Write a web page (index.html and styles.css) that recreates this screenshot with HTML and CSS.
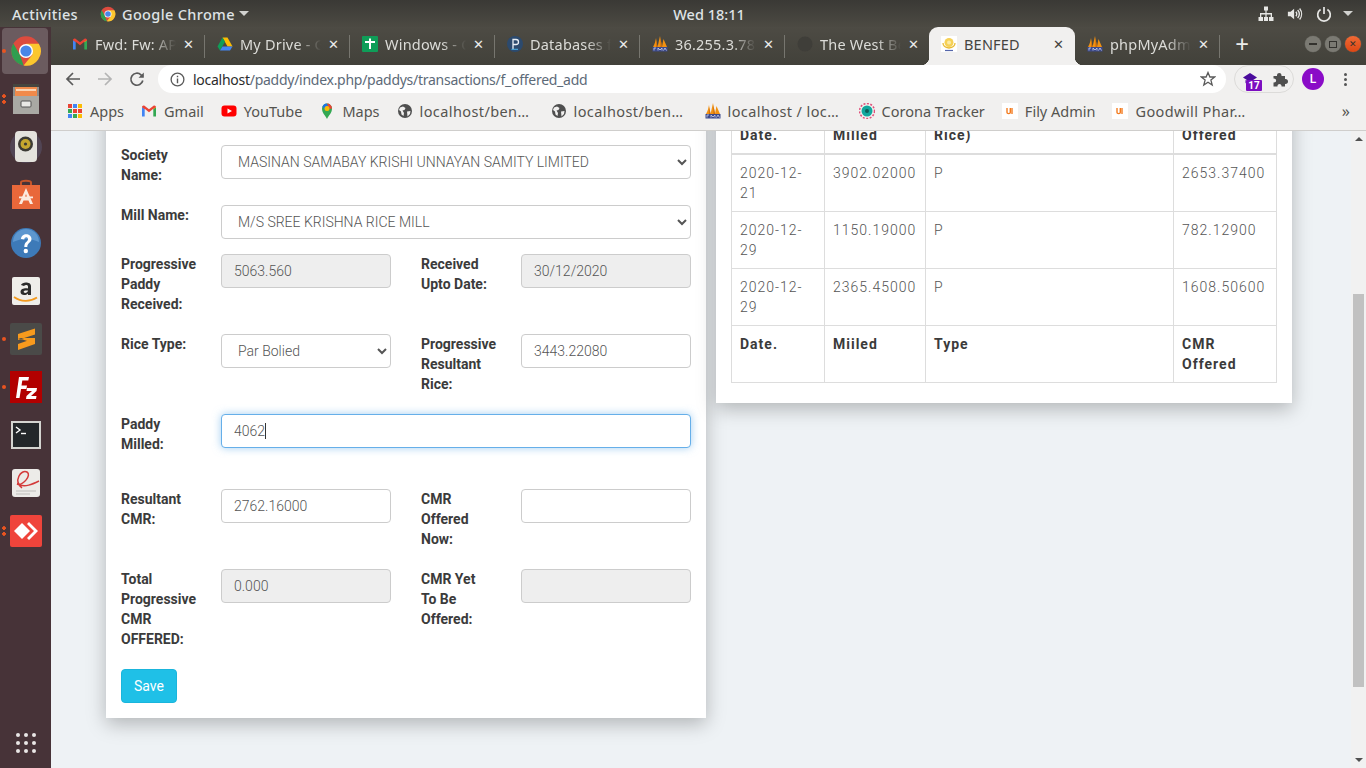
FILE: index.html
```html
<!DOCTYPE html>
<html lang="en">
<head>
<meta charset="utf-8">
<title>BENFED</title>
<link rel="stylesheet" href="styles.css">
</head>
<body>
<svg class="defs" width="0" height="0" aria-hidden="true">
  <defs>
    <symbol id="chrome" viewBox="0 0 24 24">
      <circle cx="12" cy="12" r="11" fill="#dd4b3e"/>
      <path d="M2.5 6.4L7.4 14.9 10.2 22.9A11 11 0 0 1 2.5 6.4Z" fill="#2f9e4f"/>
      <path d="M21.6 6.5H12L16.8 14.8 10.2 22.9A11 11 0 0 0 21.6 6.5Z" fill="#fbc72e"/>
      <circle cx="12" cy="12" r="5.3" fill="#fff"/>
      <circle cx="12" cy="12" r="4.2" fill="#4a86e8"/>
    </symbol>
    <symbol id="pma" viewBox="0 0 16 16">
      <path d="M1 11C3 8 3.500 4 4 2L5.500 11ZM5.500 11C6.500 7 7.500 2 8 0L10 11ZM10 11C10.500 8 11 5 11.500 3L15 11Z" fill="#f29111"/>
      <path d="M4.500 4L5.500 11H4.200ZM8.500 2L10 11H8.500Z" fill="#c8670a"/>
      <rect x="0.500" y="11" width="15" height="4.500" fill="#3c4a8c"/>
      <path d="M2 14.500V12H4M6 14.500V12L8 14 10 12V14.500M11.500 14.500L13 12 14.500 14.500" fill="none" stroke="#cdd2ea" stroke-width=".8"/>
    </symbol>
    <symbol id="globe" viewBox="0 0 16 16">
      <circle cx="8" cy="8" r="7" fill="#4f4f4f"/>
      <path d="M3 4.500L6 3.500 8.500 5 7.500 7 5.500 7.500 7 10 6.500 13 4.500 11.500 4 8.500 2 7ZM10 8.500L13.500 8 13 11 10.500 13.500Z" fill="#f1f0ef"/>
    </symbol>
    <symbol id="gmail" viewBox="0 0 16 16">
      <path d="M1 13.500V4L3.700 5.800V13.500Z" fill="#4285f4"/>
      <path d="M12.300 13.500V5.800L15 4V13.500Z" fill="#34a853"/>
      <path d="M1 4.200C1 2.800 2.400 2 3.500 2.800L8 6.200 12.500 2.800C13.600 2 15 2.800 15 4.200L12.300 6.200V5.800L8 9.200 3.700 5.800V6.200Z" fill="#ea4335"/>
      <path d="M12.300 6.200L15 4.200V4L12.300 5.800Z" fill="#fbbc04"/>
    </symbol>
    <symbol id="ui" viewBox="0 0 16 16">
      <rect width="16" height="16" fill="#fff"/>
      <path d="M5 5V9.500C5 11 8.300 11 8.300 9.500V5" fill="none" stroke="#f47c20" stroke-width="1.400"/>
      <path d="M10 5V11" stroke="#f47c20" stroke-width="1.400"/>
    </symbol>
  </defs>
</svg>

<header class="topbar">
  <div class="tb-left">
    <span class="tb-activities">Activities</span>
    <span class="tb-app">
      <svg class="ic16"><use href="#chrome"/></svg>
      <span>Google Chrome</span>
      <i class="tb-caret"></i>
    </span>
  </div>
  <div class="tb-clock">Wed 18:11</div>
  <div class="tb-right">
    <svg class="tb-sys" viewBox="0 0 16 16"><path d="M6 0.500H10V4.500H8.600V7H14V11H15.500V15H11V11H12.700V8.500H8.600V11H10V15H6V11H7.400V8.500H3.300V11H5V15H0.500V11H2V7H7.400V4.500H6Z" fill="#e6e6e4"/></svg>
    <svg class="tb-sys" viewBox="0 0 18 16"><path d="M1 5.500H4L8 2V14L4 10.500H1Z" fill="#e6e6e4"/><path d="M10 5.500A4 4 0 0 1 10 10.500M12 3.500A7 7 0 0 1 12 12.500M14.200 1.800A10 10 0 0 1 14.200 14.200" fill="none" stroke="#e6e6e4" stroke-width="1.500"/></svg>
    <svg class="tb-sys" viewBox="0 0 16 16"><path d="M4.600 3.500A6.300 6.300 0 1 0 11.400 3.500M8 1V8" fill="none" stroke="#e6e6e4" stroke-width="1.700"/></svg>
    <i class="tb-caret"></i>
  </div>
</header>

<div class="desk">
  <nav class="dock">
    <div class="dock-item is-active">
      <i class="dots one"></i>
      <svg class="dock-ic"><use href="#chrome"/></svg>
    </div>
    <div class="dock-item">
      <i class="dots two"></i>
      <svg class="dock-ic" viewBox="0 0 32 32">
        <rect x="3" y="1" width="26" height="30" rx="2" fill="#8d8d8a"/>
        <rect x="3" y="1" width="26" height="3" fill="#45453f"/>
        <rect x="5" y="4" width="22" height="9" fill="#f08a4b"/>
        <rect x="6" y="6" width="20" height="2" fill="#f9d5b6"/>
        <rect x="3" y="13" width="26" height="18" fill="#a9a9a4"/>
        <rect x="11" y="18" width="10" height="6" rx="1" fill="#e9e9e6" stroke="#555" stroke-width="1"/>
      </svg>
    </div>
    <div class="dock-item">
      <svg class="dock-ic" viewBox="0 0 32 32">
        <circle cx="16" cy="16" r="16" fill="#5e5b78" opacity=".45"/>
        <rect x="5" y="0" width="22" height="31" rx="4" fill="#e4e3dd"/>
        <circle cx="15.500" cy="13" r="7.500" fill="#3c3b34"/>
        <circle cx="15.500" cy="13" r="5" fill="#c5a72f"/>
        <circle cx="15.500" cy="13" r="1.600" fill="#3c3b34"/>
      </svg>
    </div>
    <div class="dock-item">
      <svg class="dock-ic" viewBox="0 0 32 32">
        <path d="M11 6V3.500C11 1 21 1 21 3.500V6" fill="none" stroke="#c4552b" stroke-width="2"/>
        <path d="M2 6H30V30H2Z" fill="#e9683a"/>
        <path d="M16 9L23 25H20L18.500 21.500H13.500L12 25H9ZM14.500 19H17.500L16 15Z" fill="#fbeadf"/>
        <rect x="9" y="17.500" width="14" height="1.800" fill="#fbeadf"/>
      </svg>
    </div>
    <div class="dock-item">
      <svg class="dock-ic" viewBox="0 0 32 32">
        <circle cx="16" cy="16" r="15" fill="#3d7ab8"/>
        <path d="M3 15A13 13 0 0 1 29 15C20 11 12 11 3 15Z" fill="#5d97cf"/>
        <path d="M11 12C11 5.500 21.500 5.500 21.500 12C21.500 16 17.300 15.500 17.300 20H14.300C14.300 14.500 18 15 18 12C18 9.500 14.300 9.500 14.300 12.500Z" fill="#fff"/>
        <circle cx="15.800" cy="24" r="2.200" fill="#fff"/>
      </svg>
    </div>
    <div class="dock-item">
      <svg class="dock-ic" viewBox="0 0 32 32">
        <rect x="2" y="2" width="28" height="28" rx="2" fill="#efeeea"/>
        <path d="M11 10C12 6.500 21 6.500 21 11V20H18V18.500C15.500 21 10.500 20.500 10.500 17C10.500 13.500 15 13 18 13.500V11.500C18 9.500 15 9.500 14 11ZM13.700 16.800C13.700 18.800 18 18 18 15.500C15.500 15.200 13.700 15.500 13.700 16.800Z" fill="#2b2b2b"/>
        <path d="M4 22C11 27 20 27 27 22.500" fill="none" stroke="#f39a1f" stroke-width="1.800"/>
      </svg>
    </div>
    <div class="dock-item">
      <i class="dots one"></i>
      <svg class="dock-ic" viewBox="0 0 32 32">
        <rect width="32" height="32" rx="2" fill="#4a4a48"/>
        <path d="M25 5.500V11.500L8 17V11ZM8 15L25 20.500V15ZM25 20.500V15L8 21V27L25 21Z" fill="#f79a1d"/>
      </svg>
    </div>
    <div class="dock-item">
      <i class="dots one"></i>
      <svg class="dock-ic" viewBox="0 0 32 32">
        <rect width="32" height="32" fill="#b20000"/>
        <path d="M6 27L9 6H19L18.300 9.500H12.300L11.500 14.500H17L16.400 18H11L9.500 27Z" fill="#fff"/>
        <path d="M17 17H27L26.500 20 21 25H26.500L26 28H16L16.500 25 22 20H16.500Z" fill="#fff"/>
      </svg>
    </div>
    <div class="dock-item">
      <svg class="dock-ic" viewBox="0 0 32 32">
        <rect x="1" y="2" width="30" height="28" fill="#d4d4d0"/>
        <rect x="3" y="4" width="26" height="24" fill="#23272a"/>
        <path d="M6 8L10 11 6 14" fill="none" stroke="#fff" stroke-width="1.400"/>
        <path d="M11 14.500H16" stroke="#fff" stroke-width="1.400"/>
      </svg>
    </div>
    <div class="dock-item">
      <svg class="dock-ic" viewBox="0 0 32 32">
        <rect x="2" y="2" width="28" height="28" rx="3" fill="#ecebe8"/>
        <path d="M12 21C3 14 11 2 17 5C22 8 13 19 7 17C15 21 23 17 29 14" fill="none" stroke="#d33a3a" stroke-width="1.500"/>
        <path d="M6 24H26M6 27H20" stroke="#bdbdb9" stroke-width="1.200"/>
      </svg>
    </div>
    <div class="dock-item">
      <i class="dots two"></i>
      <svg class="dock-ic" viewBox="0 0 32 32">
        <rect width="32" height="32" rx="2" fill="#ef443b"/>
        <path d="M12 8L20 16 12 24 4 16Z" fill="#fff"/>
        <path d="M19 7L28 16 19 25 17 23 24 16 17 9Z" fill="#fff"/>
      </svg>
    </div>
    <div class="dock-item dock-grid">
      <div class="grid-dots">
        <i></i><i></i><i></i><i></i><i></i><i></i><i></i><i></i><i></i>
      </div>
    </div>
  </nav>

  <main class="browser">
    <div class="tabs">
      <div class="tab">
        <svg class="ic16"><use href="#gmail"/></svg>
        <span class="tab-title">Fwd: Fw: AP</span>
        <span class="tab-x">✕</span>
      </div>
      <div class="tab">
        <svg class="ic16" viewBox="0 0 16 16"><path d="M5.500 1.500H10.500L15.500 10.500H10.500Z" fill="#fbbc04"/><path d="M5.500 1.500L0.500 10.500 3 14.500 8 5.800Z" fill="#0f9d58"/><path d="M3 14.500H13L15.500 10.500H5.500Z" fill="#4285f4"/></svg>
        <span class="tab-title">My Drive - G</span>
        <span class="tab-x">✕</span>
      </div>
      <div class="tab">
        <svg class="ic16" viewBox="0 0 16 16"><rect width="16" height="16" rx="1" fill="#0f9d58"/><path d="M3 6H13M8 2.500V13" stroke="#fff" stroke-width="2"/></svg>
        <span class="tab-title">Windows - C</span>
        <span class="tab-x">✕</span>
      </div>
      <div class="tab">
        <svg class="ic16" viewBox="0 0 16 16"><circle cx="8" cy="8" r="8" fill="#2c4a6e"/><path d="M6 13V3.500H9A2.500 2.500 0 0 1 9 8.500H6" fill="none" stroke="#e8eef5" stroke-width="1.300"/><path d="M4.500 13.300H11" stroke="#4fb3e8" stroke-width="1"/></svg>
        <span class="tab-title">Databases f</span>
        <span class="tab-x">✕</span>
      </div>
      <div class="tab">
        <svg class="ic16"><use href="#pma"/></svg>
        <span class="tab-title">36.255.3.78:</span>
        <span class="tab-x">✕</span>
      </div>
      <div class="tab tab-nosep">
        <svg class="ic16" viewBox="0 0 16 16"><circle cx="8" cy="8" r="7.500" fill="#3f3e39"/></svg>
        <span class="tab-title">The West Be</span>
        <span class="tab-x">✕</span>
      </div>
      <div class="tab is-active">
        <svg class="ic16" viewBox="0 0 16 16"><rect width="16" height="16" fill="#fff"/><circle cx="8" cy="6.500" r="4.500" fill="#f6d155"/><circle cx="8" cy="6.500" r="2" fill="#fbeaa5"/><path d="M2 7C2 10 4 11.500 8 12 12 11.500 14 10 14 7" fill="none" stroke="#e9bc36" stroke-width="1.300"/><path d="M4 14.500H12" stroke="#5566aa" stroke-width="1.200"/></svg>
        <span class="tab-title">BENFED</span>
        <span class="tab-x">✕</span>
      </div>
      <div class="tab">
        <svg class="ic16"><use href="#pma"/></svg>
        <span class="tab-title">phpMyAdmi</span>
        <span class="tab-x">✕</span>
      </div>
      <span class="tab-plus">+</span>
      <div class="win-btns">
        <span class="win-btn"><i class="win-min"></i></span>
        <span class="win-btn"><i class="win-max"></i></span>
        <span class="win-btn win-close">✕</span>
      </div>
    </div>

    <div class="toolbar">
      <svg class="tool" viewBox="0 0 16 16"><path d="M15 8H2M8 2L2 8 8 14" fill="none" stroke="#5a5a5a" stroke-width="1.700"/></svg>
      <svg class="tool" viewBox="0 0 16 16"><path d="M1 8H14M8 2L14 8 8 14" fill="none" stroke="#b4b4b4" stroke-width="1.700"/></svg>
      <svg class="tool" viewBox="0 0 16 16"><path d="M13.800 9.500A6 6 0 1 1 12 3.800L14 5.500" fill="none" stroke="#5a5a5a" stroke-width="1.700"/><path d="M14.800 1.500V6.800H9.500Z" fill="#5a5a5a"/></svg>
      <div class="omnibox">
        <svg class="omni-info" viewBox="0 0 16 16"><circle cx="8" cy="8" r="6.800" fill="none" stroke="#5a5a5a" stroke-width="1.400"/><path d="M8 7V12M8 4V5.600" stroke="#5a5a5a" stroke-width="1.500"/></svg>
        <span class="url"><b>localhost</b>/paddy/index.php/paddys/transactions/f_offered_add</span>
        <svg class="omni-star" viewBox="0 0 16 16"><path d="M8 1.500L9.900 6H14.700L10.900 9.100 12.200 14 8 11.300 3.800 14 5.100 9.100 1.300 6H6.100Z" fill="none" stroke="#5a5a5a" stroke-width="1.300"/></svg>
      </div>
      <div class="ext-pill">
        <span class="ext-cap">
          <svg class="ic16" viewBox="0 0 16 16"><path d="M8 2L15 6.500 8 11 1 6.500Z" fill="#4a0b9c"/><path d="M3.500 9V12L8 14.500 10 13V10.500L8 12Z" fill="#4a0b9c"/></svg>
          <span class="ext-badge">17</span>
        </span>
        <svg class="ic16" viewBox="0 0 16 16"><path d="M1.500 5H5C4.500 1 10 1 9.500 5H13V8C17 7.500 17 13.500 13 13V15.500H9.500C10 12 5 12 5.500 15.500H1.500V11.500C5 12 5 7 1.500 7.500Z" fill="#4f4f4f"/></svg>
      </div>
      <span class="avatar">L</span>
      <div class="kebab"><i></i><i></i><i></i></div>
    </div>

    <div class="bookmarks">
      <span class="bm">
        <span class="apps-ic"><i class="a1"></i><i class="a2"></i><i class="a3"></i><i class="a4"></i><i class="a5"></i><i class="a6"></i><i class="a7"></i><i class="a8"></i><i class="a9"></i></span>
        <span>Apps</span>
      </span>
      <span class="bm"><svg class="ic16"><use href="#gmail"/></svg><span>Gmail</span></span>
      <span class="bm"><svg class="ic16" viewBox="0 0 16 16"><rect x="0.500" y="2.500" width="15" height="11" rx="3" fill="#f00"/><path d="M6.500 5.500V10.500L11 8Z" fill="#fff"/></svg><span>YouTube</span></span>
      <span class="bm"><svg class="ic16" viewBox="0 0 16 16"><path d="M8 16C6 12 3 10 3 5.500A5 5 0 0 1 13 5.500C13 10 10 12 8 16Z" fill="#34a853"/><path d="M3.500 3.500A5 5 0 0 1 8 .5L9 3 5.800 6.500Z" fill="#1a73e8"/><path d="M8 .5A5 5 0 0 1 13 5.500L10.500 6 9 3Z" fill="#ea4335"/><path d="M10.500 5.500A2.500 2.500 0 1 1 5.500 5.500 2.500 2.500 0 0 1 10.500 5.500Z" fill="#fbbc04"/></svg><span>Maps</span></span>
      <span class="bm bm-lh"><svg class="ic16"><use href="#globe"/></svg><span>localhost/ben…</span></span>
      <span class="bm bm-lh"><svg class="ic16"><use href="#globe"/></svg><span>localhost/ben…</span></span>
      <span class="bm bm-lh"><svg class="ic16"><use href="#pma"/></svg><span>localhost / loc…</span></span>
      <span class="bm"><svg class="ic16" viewBox="0 0 16 16"><circle cx="8" cy="8" r="7.500" fill="none" stroke="#e0507a" stroke-width="1.500" stroke-dasharray="2 1.500"/><circle cx="8" cy="8" r="5.500" fill="#12a79d"/><circle cx="8" cy="8" r="2" fill="#0c5e5a"/></svg><span>Corona Tracker</span></span>
      <span class="bm"><svg class="ic16"><use href="#ui"/></svg><span>Fily Admin</span></span>
      <span class="bm bm-trunc"><svg class="ic16"><use href="#ui"/></svg><span>Goodwill Phar…</span></span>
      <span class="bm-more">»</span>
    </div>

    <div class="viewport">
      <div class="page">
        <section class="card card-form">
          <div class="row row-tall">
            <label class="lbl">Society Name:</label>
            <select class="ctl ctl-wide"><option>MASINAN SAMABAY KRISHI UNNAYAN SAMITY LIMITED</option></select>
          </div>
          <div class="row row-tight">
            <label class="lbl">Mill Name:</label>
            <select class="ctl ctl-wide"><option>M/S SREE KRISHNA RICE MILL</option></select>
          </div>
          <div class="row">
            <label class="lbl">Progressive Paddy Received:</label>
            <input class="ctl" disabled value="5063.560">
            <label class="lbl lbl-2">Received Upto Date:</label>
            <input class="ctl" disabled value="30/12/2020">
          </div>
          <div class="row">
            <label class="lbl">Rice Type:</label>
            <select class="ctl"><option>Par Bolied</option></select>
            <label class="lbl lbl-2">Progressive Resultant Rice:</label>
            <input class="ctl" value="3443.22080">
          </div>
          <div class="row row-wide">
            <label class="lbl">Paddy Milled:</label>
            <div class="ctl-wide focus-wrap">
              <input class="ctl is-focus" value="4062">
              <i class="caret"></i>
            </div>
          </div>
          <div class="row">
            <label class="lbl">Resultant CMR:</label>
            <input class="ctl" value="2762.16000">
            <label class="lbl lbl-2">CMR Offered Now:</label>
            <input class="ctl" value="">
          </div>
          <div class="row">
            <label class="lbl">Total Progressive CMR OFFERED:</label>
            <input class="ctl" disabled value="0.000">
            <label class="lbl lbl-2">CMR Yet<br>To Be<br>Offered:</label>
            <input class="ctl" disabled value="">
          </div>
          <button class="btn-save" type="button">Save</button>
        </section>

        <section class="card card-table">
          <table class="tbl">
            <colgroup>
              <col class="c1"><col class="c2"><col class="c3"><col class="c4">
            </colgroup>
            <thead>
              <tr><th>Date.</th><th>Milled</th><th>Rice)</th><th>Offered</th></tr>
            </thead>
            <tbody>
              <tr><td>2020-12-21</td><td>3902.02000</td><td>P</td><td>2653.37400</td></tr>
              <tr><td>2020-12-29</td><td>1150.19000</td><td>P</td><td>782.12900</td></tr>
              <tr><td>2020-12-29</td><td>2365.45000</td><td>P</td><td>1608.50600</td></tr>
            </tbody>
            <tfoot>
              <tr><th>Date.</th><th>Miiled</th><th>Type</th><th>CMR Offered</th></tr>
            </tfoot>
          </table>
        </section>
      </div>
      <div class="scrollbar">
        <i class="sb-up"></i>
        <div class="sb-track"><div class="sb-thumb"></div></div>
        <i class="sb-down"></i>
      </div>
    </div>
  </main>
</div>
</body>
</html>
```

FILE: styles.css
```css
* { box-sizing: border-box; }
html, body { margin: 0; height: 100%; }
body {
  width: 1366px;
  height: 768px;
  overflow: hidden;
  display: flex;
  flex-direction: column;
  font-family: "Noto Sans", sans-serif;
  background: #473338;
}
.defs { position: absolute; }
.ic16 { width: 16px; height: 16px; flex: none; display: block; }

/* Top bar */
.topbar {
  height: 27px;
  flex: none;
  display: flex;
  align-items: center;
  padding-left: 12px;
  background: linear-gradient(#3a3935, #4c4a43);
  color: #dfe3e6;
  font-size: 14.500px;
  font-weight: 500;
}
.tb-left { width: 661px; display: flex; align-items: center; gap: 20px; letter-spacing: .35px; }
.tb-activities { width: 68px; }
.tb-app { display: flex; align-items: center; gap: 6px; }
.tb-caret {
  display: block;
  width: 0; height: 0;
  margin-left: -2px;
  border-left: 5px solid transparent;
  border-right: 5px solid transparent;
  border-top: 5px solid #d2d2cf;
}
.tb-clock { width: 72px; text-align: center; white-space: nowrap; }
.tb-right { margin-left: auto; display: flex; align-items: center; gap: 13px; padding-right: 13px; }
.tb-sys { width: 16px; height: 16px; display: block; }

/* Dock */
.desk { flex: 1; min-height: 0; display: flex; }
.dock { width: 51px; flex: none; display: flex; flex-direction: column; background: #473338; }
.dock-item { position: relative; height: 48px; flex: none; display: flex; align-items: center; justify-content: center; }
.dock-item.is-active::before {
  content: "";
  position: absolute;
  left: 2px; right: 3px; top: 1px; bottom: 1px;
  border-radius: 4px;
  background: rgba(255,255,255,.2);
}
.dock-ic { position: relative; width: 32px; height: 32px; display: block; }
.dots { position: absolute; left: 2px; width: 4px; border-radius: 2px; }
.dots.one { top: 22px; height: 4px; background: #e95420; }
.dots.two { top: 19px; height: 10px; background: radial-gradient(circle at 2px 2px, #e95420 2px, transparent 2px), radial-gradient(circle at 2px 8px, #e95420 2px, transparent 2px); }
.dock-grid { margin-top: auto; margin-bottom: 1px; }
.grid-dots { display: grid; grid-template-columns: repeat(3, 4px); gap: 4px; }
.grid-dots i { width: 4px; height: 4px; border-radius: 50%; background: #e9e7e6; }

/* Browser */
.browser { flex: 1; min-width: 0; display: flex; flex-direction: column; }
.tabs {
  height: 38px;
  flex: none;
  display: flex;
  padding-left: 9px;
  align-items: stretch;
  background: linear-gradient(#4d4b44, #42413a);
}
.tab {
  position: relative;
  width: 145px;
  flex: none;
  display: flex;
  align-items: center;
  padding: 0 9px 4px 12px;
  color: #dcdcd8;
  font-size: 14.500px;
  letter-spacing: .2px;
}
.tab::after {
  content: "";
  position: absolute;
  right: 0; top: 8px; bottom: 7px;
  width: 1px;
  background: #77766f;
}
.tab.is-active {
  width: 146px;
  margin-left: -1px;
  background: #f1f0ef;
  color: #45443f;
  border-radius: 9px 9px 0 0;
}
.tab-nosep::after { display: none; }
.tab.is-active::before, .tab.is-active::after {
  content: "";
  position: absolute;
  top: auto;
  bottom: 0;
  width: 8px;
  height: 8px;
}
.tab.is-active::before { left: -8px; background: radial-gradient(circle at 0 0, transparent 8px, #f1f0ef 8.500px); }
.tab.is-active::after { right: -8px; background: radial-gradient(circle at 100% 0, transparent 8px, #f1f0ef 8.500px); }
.tab-title {
  flex: 1;
  min-width: 0;
  margin: 0 6px 0 7px;
  white-space: nowrap;
  overflow: hidden;
  -webkit-mask-image: linear-gradient(90deg, #000 70%, transparent);
  mask-image: linear-gradient(90deg, #000 70%, transparent);
}
.tab.is-active .tab-title { -webkit-mask-image: none; mask-image: none; }
.tab-x { width: 14px; flex: none; text-align: center; font-size: 13px; color: #ececea; }
.tab.is-active .tab-x { color: #45443f; }
.tab-plus { margin-left: 13px; width: 18px; font-size: 24px; line-height: 34px; color: #ececea; text-align: center; }
.win-btns { margin-left: auto; display: flex; align-items: center; gap: 4px; padding: 0 5px 4px 0; }
.win-btn { width: 16px; height: 16px; border-radius: 50%; display: flex; align-items: center; justify-content: center; background: #7b7a73; box-shadow: 0 0 0 .5px #5b5a53; }
.win-min { display: block; width: 8px; height: 1.500px; background: #33322e; }
.win-max { display: block; width: 8px; height: 7px; border: 1px solid #33322e; }
.win-close { background: linear-gradient(#f06a35, #de4714); color: #33322e; font-size: 9px; line-height: 16px; }

.toolbar {
  height: 30px;
  flex: none;
  display: flex;
  align-items: flex-start;
  background: #f1f0ef;
  padding-left: 14px;
}
.tool { width: 16px; height: 16px; margin-right: 16px; margin-top: 6px; flex: none; }
.omnibox {
  width: 1068px;
  height: 28px;
  margin-left: -3px;
  flex: none;
  display: flex;
  align-items: center;
  padding: 0 10px 0 12px;
  background: #fff;
  border-radius: 14px;
  font-size: 14px;
  letter-spacing: -.27px;
  color: #5d6a78;
}
.omni-info { width: 15px; height: 15px; flex: none; margin-right: 8px; }
.url { flex: 1; white-space: nowrap; }
.url b { font-weight: 400; color: #2c2c2c; }
.omni-star { width: 16px; height: 16px; flex: none; }
.ext-pill {
  width: 60px;
  height: 28px;
  margin-left: 8px;
  flex: none;
  display: flex;
  align-items: center;
  gap: 14px;
  padding-left: 7px;
  border: 1px solid #dcdbd9;
  border-radius: 14px;
}
.ext-cap { position: relative; display: block; }
.ext-badge {
  position: absolute;
  left: 4px; top: 9px;
  width: 16px; height: 11px;
  background: #7c0ec0;
  border-radius: 1px;
  color: #fff;
  font: 700 10px/11px "Roboto", sans-serif;
  text-align: center;
}
.avatar {
  width: 22px; height: 22px;
  margin: 3px 0 0 8px;
  flex: none;
  border-radius: 50%;
  background: #8a0cc7;
  color: #fff;
  font: 500 12px/22px "Roboto", sans-serif;
  text-align: center;
}
.kebab { margin: 8px 0 0 20px; display: flex; flex-direction: column; gap: 2px; }
.kebab i { display: block; width: 3px; height: 3px; border-radius: 50%; background: #555; }

.bookmarks {
  height: 36px;
  flex: none;
  display: flex;
  align-items: center;
  gap: 17px;
  padding: 0 0 3px 16px;
  background: #f1f0ef;
  border-bottom: 1px solid #cfcecc;
  font-size: 14.500px;
  color: #55544f;
}
.bm { display: flex; align-items: center; gap: 7px; white-space: nowrap; flex: none; }
.bm-lh { width: 137px; letter-spacing: .4px; }
.bm-trunc { letter-spacing: .4px; }
.bm-more { margin-left: auto; margin-right: 16px; font-size: 16px; color: #55544f; }
.apps-ic { width: 14px; height: 14px; display: grid; grid-template-columns: repeat(3, 4px); gap: 1px; margin: 0 1px; }
.apps-ic i { display: block; width: 4px; height: 4px; }
.a1, .a5 { background: #ea4335; }
.a2, .a7 { background: #4285f4; }
.a3, .a9 { background: #fbbc04; }
.a4, .a8 { background: #34a853; }
.a6 { background: #ea4335; }

/* Page */
.viewport { flex: 1; min-height: 0; display: flex; overflow: hidden; background: #eef2f5; }
.page {
  flex: 1;
  min-width: 0;
  display: flex;
  align-items: flex-start;
  gap: 10px;
  padding-left: 55px;
  margin-top: -51px;
  font-family: "Roboto", sans-serif;
  font-size: 14px;
  line-height: 20px;
}
.card { background: #fff; box-shadow: 0 6px 18px rgba(0,0,0,.25); flex: none; }
.card-form { width: 600px; padding: 65px 15px 15px; }
.card-table { width: 576px; padding: 16px 15px 20px; }

.row {
  display: grid;
  grid-template-columns: 100px 170px 30px 100px 170px;
  margin-bottom: 20px;
  align-items: start;
}
.row-tight { margin-bottom: 15px; }
.row-wide { margin-bottom: 35px; }
.lbl { font-weight: 700; color: #3b3b3b; padding-right: 24px; }
.lbl-2 { grid-column: 4; }
.ctl {
  display: block;
  width: 100%;
  height: 34px;
  padding: 6px 12px;
  border: 1px solid #ccc;
  border-radius: 4px;
  background: #fff;
  color: #555;
  font: 300 14px/20px "Roboto", sans-serif;
  outline: none;
}
.ctl:disabled { background: #eee; color: #555; opacity: 1; }
.ctl-wide { grid-column: 2 / -1; }
.focus-wrap { position: relative; }
.ctl.is-focus { border-color: #66afe9; box-shadow: 0 0 8px rgba(102,175,233,.6); }
.caret { position: absolute; left: 44px; top: 9px; width: 1px; height: 16px; background: #333; }
.btn-save {
  display: block;
  width: 56px;
  height: 34px;
  padding: 0;
  border: 1px solid #1ab5dc;
  border-radius: 4px;
  background: #1fc0e7;
  color: #fff;
  font: 400 14px/20px "Roboto", sans-serif;
}

.tbl {
  width: 545px;
  table-layout: fixed;
  border-collapse: collapse;
  letter-spacing: 1px;
  color: #555;
  font-weight: 300;
}
.c1 { width: 93px; }
.c2 { width: 101px; }
.c3 { width: 248px; }
.c4 { width: 103px; }
.tbl th, .tbl td {
  padding: 8px;
  border: 1px solid #ddd;
  text-align: left;
  vertical-align: top;
  line-height: 20px;
}
.tbl th { font-weight: 700; color: #3b3b3b; }
.tbl thead th { border-bottom-width: 2px; padding-top: 28px; }

/* Scrollbar */
.scrollbar { width: 15px; flex: none; position: relative; display: flex; flex-direction: column; align-items: center; background: #f1f1f1; }
.sb-track { position: relative; flex: 1; width: 100%; }
.sb-thumb { position: absolute; left: 2px; right: 2px; top: 153px; height: 393px; background: #c1c1c1; }
.sb-up, .sb-down { flex: none; display: block; width: 0; height: 0; border-left: 4px solid transparent; border-right: 4px solid transparent; }
.sb-up { margin-top: 6px; border-bottom: 4px solid #505050; }
.sb-down { margin-bottom: 6px; border-top: 4px solid #505050; }
```
